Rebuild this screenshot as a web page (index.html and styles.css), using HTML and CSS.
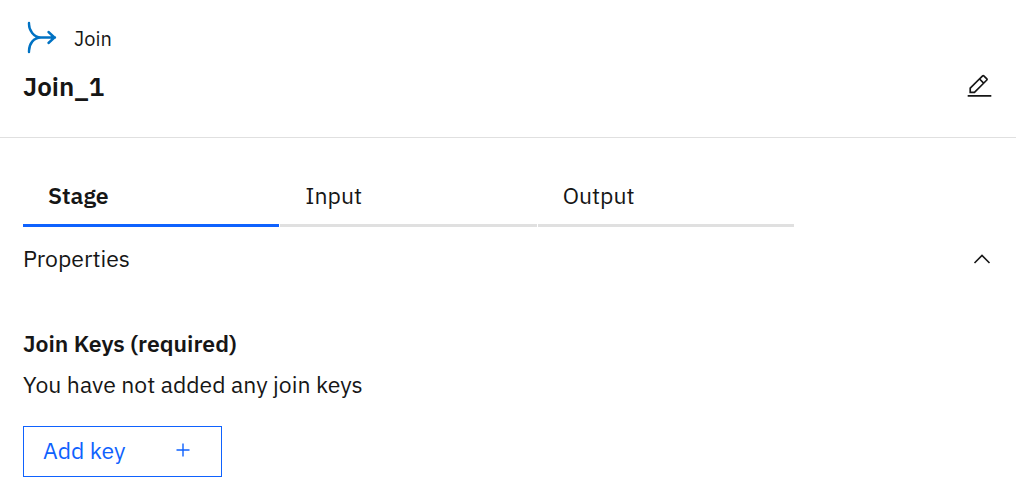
FILE: index.html
```html
<!DOCTYPE html>
<html lang="en">
<head>
<meta charset="utf-8">
<meta name="viewport" content="width=device-width, initial-scale=1">
<title>Join_1</title>
<link rel="stylesheet" href="styles.css">
</head>
<body>
<header class="header">
  <div class="kind">
    <svg class="kind-icon" viewBox="0 0 32 34" aria-hidden="true">
      <path d="M3 3V4C3 10 7.500 17.500 15 17.500H29M15 17.500C7.500 17.500 3 24 3 31V32M22.500 12L28.500 17.500L22.500 23"/>
    </svg>
    <span>Join</span>
  </div>
  <div class="title-row">
    <h1 class="title">Join_1</h1>
    <button class="icon-button" type="button" aria-label="Edit name">
      <svg class="edit-icon" viewBox="0 0 32 32" aria-hidden="true">
        <path d="M2 26H30V28H2zM25.4 9c.8-.8.8-2 0-2.800l-3.600-3.600c-.8-.8-2-.8-2.800 0l-15 15V24h6.400L25.400 9zM20.400 4L24 7.600l-3 3L17.400 7L20.400 4zM6 22v-3.600l10-10l3.600 3.600l-10 10H6z"/>
      </svg>
    </button>
  </div>
</header>
<main class="content">
  <div class="tabs" role="tablist">
    <button class="tab tab-selected" type="button" role="tab" aria-selected="true">Stage</button>
    <button class="tab" type="button" role="tab" aria-selected="false">Input</button>
    <button class="tab" type="button" role="tab" aria-selected="false">Output</button>
  </div>
  <button class="section-toggle" type="button" aria-expanded="true">
    <span>Properties</span>
    <svg class="chevron" viewBox="0 0 18 12" aria-hidden="true"><path d="M1.500 11L9 3.500L16.500 11"/></svg>
  </button>
  <section class="keys">
    <h2 class="keys-title">Join Keys (required)</h2>
    <p class="keys-empty">You have not added any join keys</p>
    <button class="add-button" type="button">
      <span>Add key</span>
      <svg class="plus" viewBox="0 0 14 14" aria-hidden="true"><path d="M7 0.500V13.500M0.500 7H13.500"/></svg>
    </button>
  </section>
</main>
</body>
</html>
```

FILE: styles.css
```css
* {
  box-sizing: border-box;
}

body {
  margin: 0;
  background: #fff;
  color: #161616;
  font-family: "IBM Plex Sans", "Noto Sans", sans-serif;
  font-size: 23px;
  line-height: 28px;
}

button {
  margin: 0;
  padding: 0;
  border: 0;
  background: none;
  color: inherit;
  font: inherit;
  text-align: left;
  cursor: pointer;
}

h1,
h2,
p {
  margin: 0;
}

.header {
  padding: 20px 23px 34px;
  border-bottom: 1px solid #e0e0e0;
}

.kind {
  display: flex;
  align-items: end;
  gap: 16px;
  padding-left: 3px;
  font-size: 20px;
  line-height: 30px;
}

.kind-icon {
  width: 32px;
  height: 34px;
  fill: none;
  stroke: #0072c3;
  stroke-width: 2.4;
  stroke-linecap: round;
}

.title-row {
  display: flex;
  align-items: center;
  justify-content: space-between;
  padding-top: 15px;
}

.title {
  font-size: 26px;
  font-weight: 600;
  line-height: 34px;
}

.icon-button {
  display: flex;
}

.edit-icon {
  width: 27px;
  height: 27px;
  fill: #161616;
}

.content {
  padding: 31px 23px 13px;
}

.tabs {
  display: grid;
  grid-template-columns: repeat(3, 1fr);
  gap: 1px;
  max-width: 771px;
}

.tab {
  padding: 12px 25px 15px;
  border-bottom: 3px solid #e0e0e0;
}

.tab-selected {
  border-color: #0f62fe;
  font-weight: 600;
}

.section-toggle {
  display: flex;
  align-items: center;
  justify-content: space-between;
  width: 100%;
  padding: 17px 2px 18px 0;
}

.chevron {
  width: 18px;
  height: 12px;
  fill: none;
  stroke: #161616;
  stroke-width: 1.6;
}

.keys {
  padding-top: 39px;
}

.keys-title {
  font-size: 23px;
  font-weight: 600;
}

.keys-empty {
  padding: 13px 0 28px;
}

.add-button {
  display: flex;
  align-items: center;
  justify-content: space-between;
  width: 199px;
  padding: 9px 31px 12px 19px;
  border: 1px solid #0f62fe;
  color: #0f62fe;
}

.plus {
  width: 14px;
  height: 14px;
  fill: none;
  stroke: #0f62fe;
  stroke-width: 1.4;
}
```
